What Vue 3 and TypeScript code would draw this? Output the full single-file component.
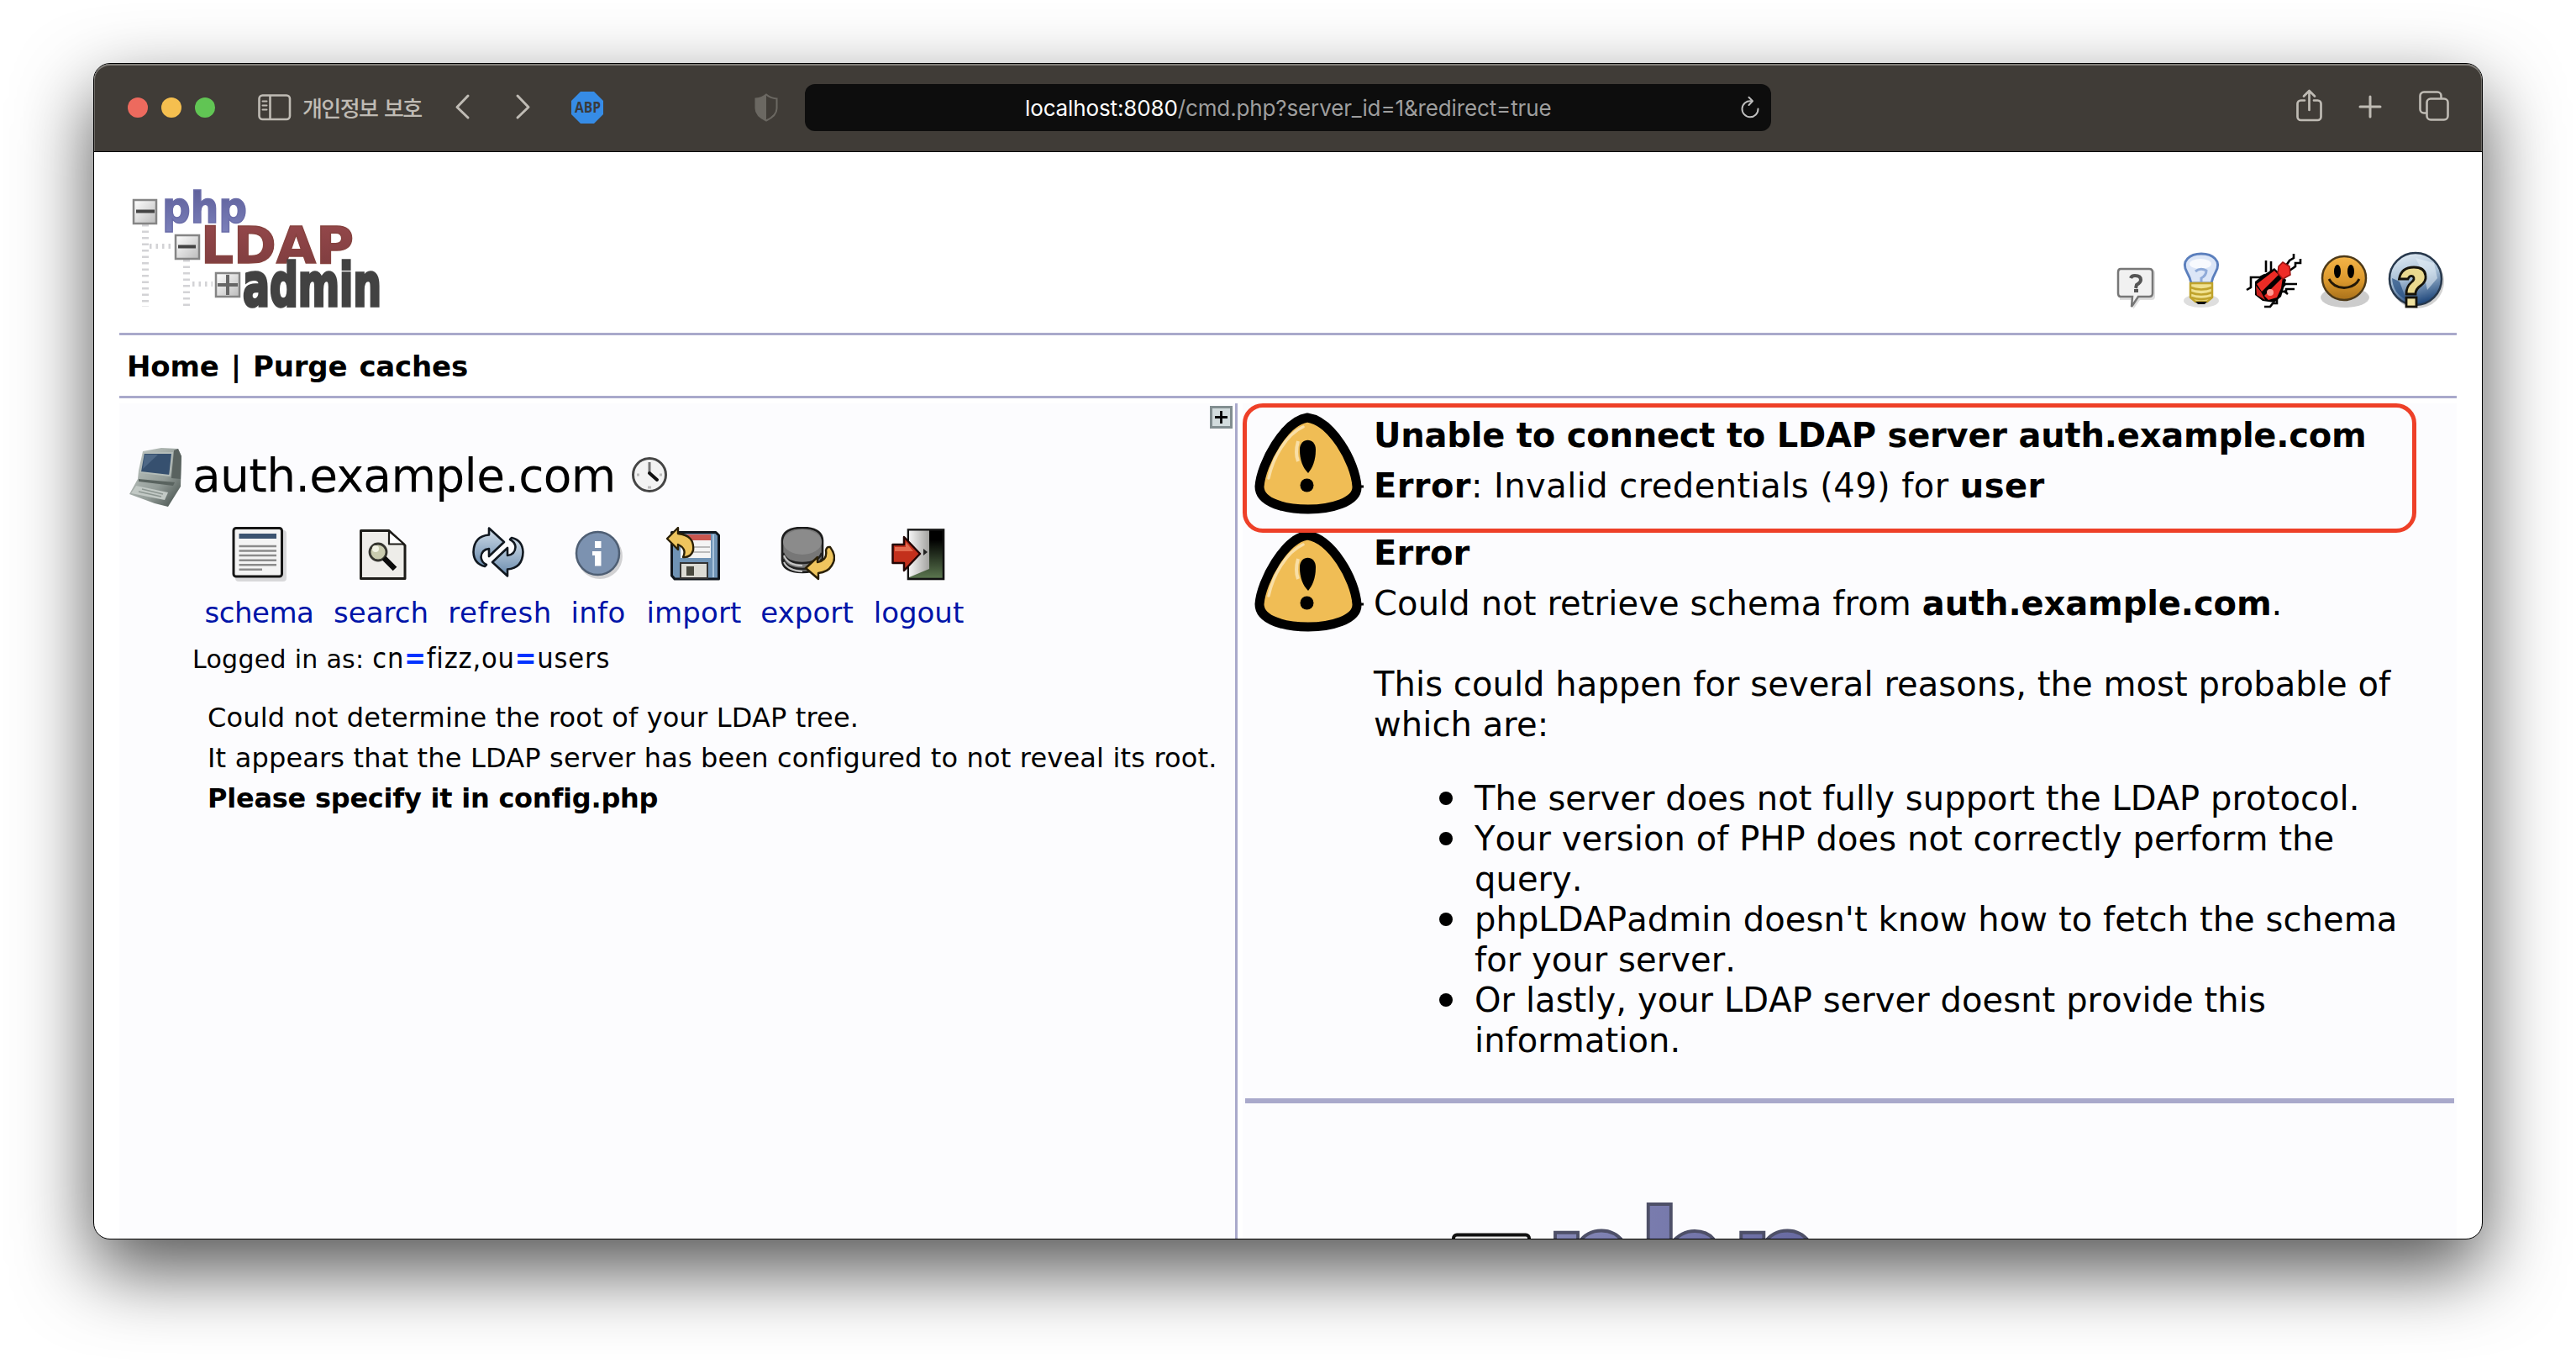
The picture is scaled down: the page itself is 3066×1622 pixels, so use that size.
<script setup lang="ts">
interface Action {
  name: string
  width: number
  spacing: number
}

const actions: Action[] = [
  { name: 'schema', width: 153, spacing: -0.5 },
  { name: 'search', width: 137, spacing: 0 },
  { name: 'refresh', width: 146, spacing: 0.6 },
  { name: 'info', width: 88, spacing: 0.3 },
  { name: 'import', width: 140, spacing: 0.1 },
  { name: 'export', width: 129, spacing: 0.1 },
  { name: 'logout', width: 137, spacing: 0 },
]

const reasons: string[][] = [
  ['The server does not fully support the LDAP protocol.'],
  ['Your version of PHP does not correctly perform the', 'query.'],
  ["phpLDAPadmin doesn't know how to fetch the schema", 'for your server.'],
  ['Or lastly, your LDAP server doesnt provide this', 'information.'],
]
</script>

<template>
  <div class="desktop">
    <div class="window">
      <header class="toolbar">
        <div class="lights"><i class="red" /><i class="amber" /><i class="green" /></div>
        <svg class="sidebar" width="40" height="32" viewBox="0 0 40 32" fill="none" stroke="#bfbbb4" stroke-width="2.6">
          <rect x="1.5" y="1.5" width="36.5" height="28.5" rx="4" />
          <path d="M14.5 1.5v28.5" />
          <path d="M5.5 8.5h5M5.5 13.5h5M5.5 18.5h5" stroke-width="2" stroke-linecap="round" />
        </svg>
        <span class="private">개인정보 보호</span>
        <svg class="back" width="20" height="32" viewBox="0 0 20 32" fill="none" stroke="#bfbbb4" stroke-width="3" stroke-linecap="round" stroke-linejoin="round"><path d="M17 3 4 16.500 17 29" /></svg>
        <svg class="forward" width="20" height="32" viewBox="0 0 20 32" fill="none" stroke="#bfbbb4" stroke-width="3" stroke-linecap="round" stroke-linejoin="round"><path d="M3 3 16 16.500 3 29" /></svg>
        <svg class="abp" width="38" height="38" viewBox="0 0 38 38">
          <path d="M11 0h16l11 11v16L27 38H11L0 27V11z" fill="#368ce6" />
          <text x="4" y="24.500" textLength="31" lengthAdjust="spacingAndGlyphs">ABP</text>
        </svg>
        <svg class="shield" width="28" height="34" viewBox="0 0 28 34">
          <path d="M14 1.500C18 5 22 6 26.500 6.500V18c0 7-5 11-12.500 14.500C6.500 29 1.500 25 1.500 18V6.500C6 6 10 5 14 1.500z" fill="none" stroke="#6b6862" stroke-width="2" />
          <path d="M14 1.500C10 5 6 6 1.500 6.500V18c0 7 5 11 12.500 14.500z" fill="#6b6862" />
        </svg>
        <div class="url">
          <span class="address"><b>localhost:8080</b>/cmd.php?server_id=1&amp;redirect=true</span>
          <svg class="reload" width="26" height="28" viewBox="0 0 26 28" fill="none" stroke="#bdbdbd" stroke-width="2" stroke-linecap="round" stroke-linejoin="round">
            <path d="M14 6.300A9.500 9.500 0 1 0 22.500 15.500" /><path d="M11.500 1.800 16 6.300 11.500 11" />
          </svg>
        </div>
        <svg class="share" width="32" height="40" viewBox="0 0 32 40" fill="none" stroke="#bfbbb4" stroke-width="2.700" stroke-linecap="round" stroke-linejoin="round">
          <path d="M10 13.500H5.500a4 4 0 0 0-4 4V33a4 4 0 0 0 4 4h20a4 4 0 0 0 4-4V17.500a4 4 0 0 0-4-4H21" />
          <path d="M15.500 25V2.500M9 8.500l6.500-6.500L22 8.500" />
        </svg>
        <svg class="plus" width="28" height="28" viewBox="0 0 28 28" stroke="#bfbbb4" stroke-width="3" stroke-linecap="round"><path d="M14 2v24M2 14h24" /></svg>
        <svg class="tabs" width="36" height="36" viewBox="0 0 36 36" fill="none" stroke="#bfbbb4" stroke-width="2.600">
          <path d="M9 26.500H6a4.500 4.500 0 0 1-4.500-4.500V6A4.500 4.500 0 0 1 6 1.500h16A4.500 4.500 0 0 1 26.500 6v3" />
          <rect x="9.500" y="9.500" width="25" height="25" rx="4.500" />
        </svg>
      </header>

      <main class="page">
        <div class="masthead">
          <svg class="logo" width="310" height="170" viewBox="0 0 310 170">
            <defs>
              <linearGradient id="blue" x1="0" y1="0" x2="0" y2="1"><stop offset="0" stop-color="#5a5b96" /><stop offset="1" stop-color="#7b80ba" /></linearGradient>
              <linearGradient id="brick" x1="0" y1="0" x2="0" y2="1"><stop offset="0" stop-color="#98494c" /><stop offset="1" stop-color="#7c3c3e" /></linearGradient>
              <linearGradient id="tile" x1="0" y1="0" x2="1" y2="1"><stop offset="0" stop-color="#fff" /><stop offset="1" stop-color="#bcbcbc" /></linearGradient>
            </defs>
            <g stroke="#d3d3d6" stroke-width="8" stroke-dasharray="2.500 5"><path d="M31 57v98M80 99v56" /></g>
            <g stroke="#d3d3d6" stroke-width="6" stroke-dasharray="2.500 5"><path d="M36 83h27M87 128h24" /></g>
            <g fill="url(#tile)" stroke="#858585" stroke-width="2.500">
              <rect x="17" y="28" width="27" height="28" /><rect x="67" y="70" width="28" height="28" /><rect x="115" y="115" width="28" height="28" />
            </g>
            <g stroke="#444" stroke-width="4"><path d="M20 41.500h22M70 83.500h21" /><path d="M117 129h24M129 117v24" stroke="#666" /></g>
            <text x="51" y="54.500" font-size="51" textLength="101" lengthAdjust="spacingAndGlyphs" fill="url(#blue)" stroke="#6a6ca8" stroke-width="1.500">php</text>
            <text x="97" y="102.500" font-size="61" textLength="182" lengthAdjust="spacingAndGlyphs" fill="url(#brick)" stroke="#86423f" stroke-width="1.500">LDAP</text>
            <text class="condensed" x="147" y="153.500" font-size="71" textLength="165" lengthAdjust="spacingAndGlyphs" fill="#424242" stroke="#424242" stroke-width="3.500">admin</text>
          </svg>
          <div class="tools">
            <svg viewBox="0 0 72 72">
              <path d="M20 24H58Q62 24 62 28V56Q62 60 58 60H44L36 71 37 60H20z" fill="#000" opacity=".13" />
              <path d="M21 23H55Q59 23 59 27V52Q59 56 55 56H42L34 68 35 56H21Q18 56 18 52V27Q18 23 21 23z" fill="#f1f1f1" stroke="#777" stroke-width="2.500" />
              <path d="M33 34Q34 31 38 31 45 31 45 36 45 39 40 42L39 46M37 49h5" fill="none" stroke="#555" stroke-width="4" />
            </svg>
            <svg viewBox="0 0 72 72">
              <ellipse cx="33" cy="61" rx="21" ry="8" fill="#000" opacity=".13" />
              <path d="M21 40Q20 34 16 27C8 13 20 5 33 5S58 13 50 27Q46 34 45 40z" fill="#dce6f7" stroke="#5b7fbd" stroke-width="2.800" />
              <ellipse cx="32" cy="17" rx="13" ry="6" fill="#fff" opacity=".8" />
              <path d="M26 26q6-5 13-1 0 6-6 9v6" fill="none" stroke="#8faad8" stroke-width="3" />
              <path d="M20 40H46V57L40 62H26L20 57z" fill="#f0e190" stroke="#c0a32c" stroke-width="2.500" />
              <path d="M20 45q13 5 26 0M20 51q13 5 26 0M21 57q12 4 24 0" fill="none" stroke="#c0a32c" stroke-width="2.500" />
              <path d="M26 62h14l-3 3h-8z" fill="#111" />
            </svg>
            <svg viewBox="0 0 72 72">
              <g fill="none" stroke="#000" stroke-width="2.600">
                <path d="M26 13v14M32 14v14M25 30 19 33H8v12l-5 3M46 44l3-3H63M43 50H50v-3h10M47 49l5 4M39 57v7h-5l-3 4H24M50 19 54 13l5-3V5M54 25 61 20v-4h6v-5" />
              </g>
              <path d="M13 38 22 31 36 22 50 36 44 56 36 63 22 61 13 54z" fill="#000" />
              <path d="M15 41 36 25 41 30 21 50zM24 55 46 33 44 46 39 57 29 60z" fill="#ea2b25" />
              <path d="M14 43l6 7 5 10-10-6z" fill="#c8201c" />
              <circle cx="31" cy="51" r="4" fill="#ff9c94" />
              <path d="M41 20 46 15 54 20 55 30 46 35 40 28z" fill="#f02c27" stroke="#9b120f" stroke-width="1.500" />
            </svg>
            <svg viewBox="0 0 72 72">
              <defs><linearGradient id="smile" x1="0" y1="0" x2="0" y2="1"><stop offset="0" stop-color="#f5b548" /><stop offset=".55" stop-color="#dc992d" /><stop offset="1" stop-color="#a8701a" /></linearGradient></defs>
              <ellipse cx="36" cy="57" rx="29" ry="12" fill="#000" opacity=".2" />
              <circle cx="35" cy="34" r="26" fill="url(#smile)" stroke="#4e3a18" stroke-width="2.500" />
              <ellipse cx="27" cy="26" rx="4" ry="8" /><ellipse cx="43" cy="26" rx="4" ry="8" />
              <path d="M17 35Q22 45 35 45.500 48 45 53 35" fill="none" stroke="#221808" stroke-width="2.800" />
            </svg>
            <svg viewBox="0 0 72 72">
              <defs><linearGradient id="globe" x1=".2" y1="0" x2=".5" y2="1"><stop offset="0" stop-color="#e3edf5" /><stop offset=".5" stop-color="#a5bdd4" /><stop offset="1" stop-color="#1f477b" /></linearGradient></defs>
              <circle cx="38" cy="38" r="32" fill="#000" opacity=".18" />
              <circle cx="36" cy="35" r="31" fill="url(#globe)" stroke="#27384c" stroke-width="2.500" />
              <path d="M36 10 58 16 62 34 50 48 46 30z" fill="#e8f0f7" opacity=".55" /><path d="M8 34l9 4 8 22Q9 52 8 34z" fill="#244d80" opacity=".7" />
              <path d="M16.500 35H27q2-5 6-3 3 3-2 7-6 5-6 14h11q0-6 6-10 7-5 6-12-1-10-14-10-15 0-17.500 14z" fill="#ead98f" stroke="#16130a" stroke-width="2.800" />
              <rect x="25" y="57" width="12" height="11" fill="#f0e2a0" stroke="#16130a" stroke-width="2.800" />
            </svg>
          </div>
        </div>
        <nav class="menu">Home | Purge caches</nav>

        <div class="panels">
          <section class="tree">
            <svg class="expand" width="27" height="27" viewBox="0 0 27 27"><rect x="1.500" y="1.500" width="24" height="24" fill="#d2dcdd" stroke="#828e90" stroke-width="3" /><path d="M13.500 6v15M6 13.500h15" stroke="#000" stroke-width="2.800" /></svg>
            <div class="server">
              <svg width="66" height="76" viewBox="0 0 66 76">
                <defs><linearGradient id="casing" x1="0" y1="0" x2="1" y2="1"><stop offset="0" stop-color="#c7ceca" /><stop offset=".6" stop-color="#939c98" /><stop offset="1" stop-color="#3c4743" /></linearGradient></defs>
                <path d="M16 6 38 2 58 3 62 12 61 48 46 72 30 68 0 57 10 39 11 29z" fill="url(#casing)" />
                <path d="M53 5 58 3 62 12 61 39 50 38z" fill="#59625f" />
                <path d="M17 8 51 8 48 35 13 31z" fill="#36506f" stroke="#b4bcb8" stroke-width="1.800" />
                <path d="M18 10 34 10 16 27z" fill="#4e6886" />
                <path d="M11 39 54 43 52 47 11 42z" fill="#59635f" />
                <path d="M8 47 46 55 42 64 2 56z" fill="#c2c9c5" /><path d="M15 51l25 6M11 54l27 6" stroke="#8c9691" stroke-width="1.500" />
              </svg>
              <h1>auth.example.com</h1>
              <svg class="clock" width="44" height="44" viewBox="0 0 44 44">
                <circle cx="22" cy="22" r="19.500" fill="#f3f3f3" stroke="#454545" stroke-width="3" />
                <path d="M22 7v14" stroke="#777" stroke-width="3" fill="none" /><path d="M22 20l9 8" stroke="#111" stroke-width="4" stroke-linecap="round" />
                <path d="M7 22h3M34 22h3M20 37h4" stroke="#bbb" stroke-width="3" />
              </svg>
            </div>
            <div class="actions">
              <div v-for="a in actions" :key="a.name" class="action" :style="{ width: a.width + 'px' }">
                <svg v-if="a.name === 'schema'" viewBox="0 0 66 66">
                  <rect x="4" y="4" width="61" height="61" rx="4" fill="#000" opacity=".14" />
                  <rect x="2" y="1.500" width="57.500" height="57.500" rx="3" fill="#f4f4f4" stroke="#161616" stroke-width="3" />
                  <path d="M8.500 11H53" stroke="#3b5370" stroke-width="6" />
                  <path d="M8.500 23H53M8.500 28.500H53M8.500 34H53M8.500 39.700H53M8.500 45.300H53M8.500 50.700H36" stroke="#8b8b8b" stroke-width="2.500" />
                </svg>
                <svg v-else-if="a.name === 'search'" viewBox="0 0 66 66">
                  <path d="M8.500 4.500H42L61 22V61.500H8.500z" fill="#eeede9" stroke="#1d1c18" stroke-width="3" stroke-linejoin="round" />
                  <path d="M42 5V20.500H60z" fill="#fff" stroke="#1d1c18" stroke-width="2.200" stroke-linejoin="round" />
                  <circle cx="29" cy="30" r="10" fill="#c9cbaf" stroke="#35352f" stroke-width="2.800" /><circle cx="26" cy="26" r="4" fill="#f2f3e4" />
                  <path d="M36 37 49 50" stroke="#0b0b0b" stroke-width="6.500" />
                </svg>
                <svg v-else-if="a.name === 'refresh'" viewBox="0 0 66 66">
                  <defs><linearGradient id="steel" x1="0" y1="0" x2="0" y2="1"><stop offset="0" stop-color="#d3dfea" /><stop offset="1" stop-color="#6789ac" /></linearGradient></defs>
                  <path d="M15 47Q2 44 1.500 30 2 11 20 9.500V1.500L38 18 20 35V26Q11 27 10.500 36 11 42 17 45z" fill="url(#steel)" stroke="#111820" stroke-width="2.600" stroke-linejoin="round" />
                  <path d="M47 13Q60 16 60.500 30 60 49 42 50.500V58.500L24 42 42 25V34Q51 33 51.500 24 51 18 45 15z" fill="url(#steel)" stroke="#111820" stroke-width="2.600" stroke-linejoin="round" />
                </svg>
                <svg v-else-if="a.name === 'info'" viewBox="0 0 66 66">
                  <circle cx="35" cy="35" r="27" fill="#000" opacity=".17" />
                  <circle cx="32.500" cy="31.500" r="25.500" fill="#7c92b0" stroke="#4f5f74" stroke-width="2.500" />
                  <path d="M29 17h7.500v8H29zM26 29h10.500v17.500H29V34H26z" fill="#fff" />
                </svg>
                <svg v-else-if="a.name === 'import'" viewBox="0 0 66 66">
                  <path d="M6.500 6.500H59L62.500 10V62H10L6.500 58z" fill="#6f93b5" stroke="#10161d" stroke-width="3" stroke-linejoin="round" />
                  <rect x="17" y="9" width="36" height="28" fill="#f4f4f4" /><rect x="17" y="9" width="36" height="7" fill="#c9564f" /><path d="M32 24h20M32 30h20" stroke="#bbb" stroke-width="2" />
                  <path d="M56 9v51" stroke="#a9c3db" stroke-width="2" />
                  <rect x="17" y="43" width="32" height="18" fill="#dcdbd4" stroke="#333" stroke-width="2" /><rect x="24" y="47" width="9" height="11" fill="#4a4a40" />
                  <path d="M1 14 14 1V8Q34 10 32 28 29 37 20 36 25 26 14 21V27z" fill="#efc55e" stroke="#2b2007" stroke-width="2.400" stroke-linejoin="round" />
                </svg>
                <svg v-else-if="a.name === 'export'" viewBox="0 0 66 66">
                  <path d="M3 16Q4 1 27 1T51 16V40Q50 54 27 54T3 40z" fill="#777" stroke="#1c1c1c" stroke-width="2.600" />
                  <path d="M4 38Q8 50 27 50T50 38M4 31Q8 43 27 43T50 31" fill="none" stroke="#222" stroke-width="2.400" /><path d="M5 34Q10 46 27 46M5 42Q10 52 27 53" fill="none" stroke="#c4c4c4" stroke-width="2" />
                  <ellipse cx="27" cy="18" rx="23" ry="15" fill="#8b8b8b" />
                  <path d="M31 49 45 36V42Q57 40 55 28 56 23 60 24 69 36 62 46 57 54 46 55V62z" fill="#efc55e" stroke="#2b2007" stroke-width="2.400" stroke-linejoin="round" />
                </svg>
                <svg v-else viewBox="0 0 66 66">
                  <defs>
                    <linearGradient id="night" x1="0" y1="0" x2="0" y2="1"><stop offset=".2" stop-color="#000" /><stop offset="1" stop-color="#5c7850" /></linearGradient>
                    <linearGradient id="leaf"><stop offset="0" stop-color="#f4f4f4" /><stop offset="1" stop-color="#a3a3a0" /></linearGradient>
                  </defs>
                  <rect x="20" y="3.500" width="42" height="58.500" fill="url(#night)" stroke="#111" stroke-width="2.600" />
                  <path d="M21 4.500H45V50L21 60z" fill="url(#leaf)" /><path d="M38 26v8l5-4z" fill="#222" />
                  <path d="M1.500 21H15V12L34 32 15 52V43H1.500z" fill="#c3301c" stroke="#230504" stroke-width="2.500" stroke-linejoin="round" /><path d="M4 24H17V18L26 29H4z" fill="#e36a4e" />
                </svg>
                <a :style="{ letterSpacing: a.spacing + 'px' }">{{ a.name }}</a>
              </div>
            </div>
            <p class="login">Logged in as: <span>cn<b>=</b>fizz,ou<b>=</b>users</span></p>
            <div class="notice">
              <p>Could not determine the root of your LDAP tree.</p>
              <p>It appears that the LDAP server has been configured to not reveal its root.</p>
              <p class="strong">Please specify it in config.php</p>
            </div>
          </section>

          <section class="content">
            <div class="highlight" />
            <article v-for="n in 2" :key="n" class="message">
              <svg class="warning" width="130" height="122" viewBox="0 0 130 122">
                <path d="M63 6C36 10 8 60 6 88c0 20 32 27 58 27s59-8 58-27C120 58 92 10 63 6z" fill="#f0bd55" stroke="#000" stroke-width="11" />
                <path d="M17 78C22 54 38 26 58 17" fill="none" stroke="#f9dfa6" stroke-width="3.500" stroke-linecap="round" />
                <path d="M52 34q-4 14 0 24" fill="none" stroke="#f9dfa6" stroke-width="4" />
                <path d="M54 44c0-15 19-15 19 0 0 13-4 22-9 28-6-6-10-15-10-28z" /><circle cx="62.500" cy="86.500" r="8" />
                <path d="M124 88h6" stroke="#000" stroke-width="3" />
              </svg>
              <div v-if="n === 1" class="body">
                <h2 class="tight">Unable to connect to LDAP server auth.example.com</h2>
                <p class="reason"><b>Error</b>: Invalid credentials (49) for <b>user</b></p>
              </div>
              <div v-else class="body">
                <h2>Error</h2>
                <p><span class="lead">Could not retrieve schema from </span><b>auth.example.com</b>.<br><br>This could happen for several reasons, the most probable of<br>which are:</p>
                <ul>
                  <li v-for="r in reasons" :key="r[0]"><div v-for="line in r" :key="line">{{ line }}</div></li>
                </ul>
              </div>
            </article>
            <div class="rule" />
            <svg class="splash" width="500" height="50" viewBox="0 0 500 50">
              <defs><linearGradient id="bevel" x1="0" y1="0" x2="1" y2="0"><stop offset="0" stop-color="#8588b6" /><stop offset="1" stop-color="#6668a0" /></linearGradient></defs>
              <rect x="2" y="40.500" width="90" height="90" rx="4" fill="#e8e8e8" stroke="#111" stroke-width="4" />
              <text x="110" y="126" font-size="160" textLength="332" lengthAdjust="spacingAndGlyphs" fill="url(#bevel)" stroke="#4e5068" stroke-width="4">php</text>
            </svg>
          </section>
        </div>
      </main>
    </div>
  </div>
</template>

<style>
body { background: #fff; }
</style>

<style scoped>
* { box-sizing: border-box; }
svg { display: block; flex: none; }
p, h1, h2, ul { margin: 0; padding: 0; }
.desktop { width: 3066px; height: 1622px; padding: 75px 0 0 111px; overflow: hidden; background: #fff; }
.window { width: 2844px; height: 1400px; border: 1px solid #000; border-radius: 20px; overflow: hidden; background: #fff; display: flex; flex-direction: column; box-shadow: 0 36px 90px rgba(0, 0, 0, .68); }
.toolbar { height: 105px; flex: none; display: flex; align-items: center; background: #403c37; border-bottom: 1px solid #000; border-radius: 19px 19px 0 0; box-shadow: inset 0 2px 0 #817e79, inset 1px 0 0 #6f6c67, inset -1px 0 0 #6f6c67; }
.lights { display: flex; gap: 16px; margin-left: 40px; }
.lights i { width: 24px; height: 24px; border-radius: 50%; }
.red { background: #ed6a5e; }
.amber { background: #f5bf4f; }
.green { background: #61c554; }
.sidebar { margin-left: 51px; margin-top: -1px; }
.private { width: 160px; margin-left: 13px; font: 500 26px/40px "Noto Sans CJK KR", sans-serif; letter-spacing: -1.6px; word-spacing: 3.4px; color: #bfbbb4; white-space: nowrap; }
.back { margin-left: 20px; margin-top: -3px; }
.forward { margin-left: 53px; margin-top: -3px; }
.abp { margin-left: 47px; }
.abp text { font: bold 17px "Open Sans", sans-serif; fill: #3a3a3c; }
.shield { margin-left: 180px; }
.url { width: 1150px; height: 56px; margin-left: 32px; display: flex; align-items: center; justify-content: flex-end; background: #0d0d0d; border-radius: 12px; }
.address { flex: 1; padding-left: 262px; padding-top: 1px; font: 26px/40px Inter, sans-serif; letter-spacing: -.13px; color: #9e9e9e; white-space: nowrap; }
.address b { font-weight: 400; color: #fff; }
.reload { margin-right: 12px; }
.share { margin-left: 625px; margin-top: -4px; }
.plus { margin-left: 42px; margin-top: -2px; }
.tabs { margin-left: 44px; margin-top: -4px; }
.page { flex: 1; padding: 0 30px; font-family: "DejaVu Sans", Verdana, sans-serif; color: #000; display: flex; flex-direction: column; min-height: 0; }
.masthead { height: 218px; flex: none; border-bottom: 3px solid #a9a9cb; display: flex; justify-content: space-between; }
.logo { margin-top: 29px; overflow: visible; }
.logo text, .splash text { font-family: "DejaVu Sans", sans-serif; font-weight: bold; }
.logo .condensed { font-family: "DejaVu Sans Condensed", "DejaVu Sans", sans-serif; }
.tools { display: flex; gap: 12px; margin: 116px 13px 0 0; }
.tools svg { width: 72px; height: 72px; }
.menu { height: 75px; flex: none; padding: 1px 0 0 9px; border-bottom: 3px solid #a9a9cb; font-weight: bold; font-size: 34px; line-height: 72px; letter-spacing: -.2px; word-spacing: 2.5px; }
.panels { flex: 1; min-height: 0; margin-top: 6px; display: flex; background: #fff; }
.tree { position: relative; width: 1331px; flex: none; background: #fcfcfe; border-right: 3px solid #a9a9cb; }
.expand { position: absolute; right: 3px; top: 3px; }
.server { display: flex; margin: 51px 0 0 12px; height: 76px; }
.server h1 { margin: 5px 0 0 9px; width: 518px; font-weight: 400; font-size: 55px; line-height: 60px; letter-spacing: -.65px; white-space: nowrap; }
.clock { margin: 12px 0 0 4px; }
.actions { display: flex; margin: 20px 0 0 90px; }
.action { flex: none; display: flex; flex-direction: column; align-items: center; }
.action svg { width: 66px; height: 66px; }
.action a { margin-top: 16px; font-size: 34px; line-height: 40px; color: #0014a8; }
.login { margin: 14px 0 0 87px; height: 42px; font-size: 30px; line-height: 40px; letter-spacing: .29px; white-space: nowrap; }
.login span { font-family: "DejaVu Sans Condensed", "DejaVu Sans", sans-serif; font-size: 34px; letter-spacing: .85px; }
.login b { color: #0032ff; }
.notice { margin: 25px 0 0 105px; font-size: 32px; line-height: 48px; letter-spacing: .17px; white-space: nowrap; }
.strong { font-weight: bold; letter-spacing: -.24px; }
.content { position: relative; flex: 1; margin-left: 6px; background: #fcfcfe; overflow: hidden; font-size: 40px; line-height: 48px; letter-spacing: .08px; }
.highlight { position: absolute; left: 0; top: 0; width: 1397px; height: 154px; border: 5px solid #ee4028; border-radius: 24px; z-index: 2; }
.message { display: flex; padding-left: 14px; min-height: 140px; }
.warning { margin-top: 11px; }
.body { margin: 14px 0 0 12px; white-space: nowrap; }
.body h2 { font-size: 40px; line-height: 48px; font-weight: bold; margin-bottom: 12px; }
.body b { letter-spacing: -.1px; }
.body h2.tight { letter-spacing: -.22px; }
.body .reason { letter-spacing: .45px; }
.body .reason b { letter-spacing: .4px; }
.lead { letter-spacing: .12px; }
ul { list-style: none; margin-top: 40px; font-kerning: none; }
li { position: relative; padding-left: 120px; }
li::before { content: ""; position: absolute; left: 78px; top: 16px; width: 16px; height: 16px; border-radius: 50%; background: #000; }
.rule { height: 6px; margin: 45px 3px 0; background: #a9a9cb; }
.splash { margin: 116px 0 0 249px; }
</style>
